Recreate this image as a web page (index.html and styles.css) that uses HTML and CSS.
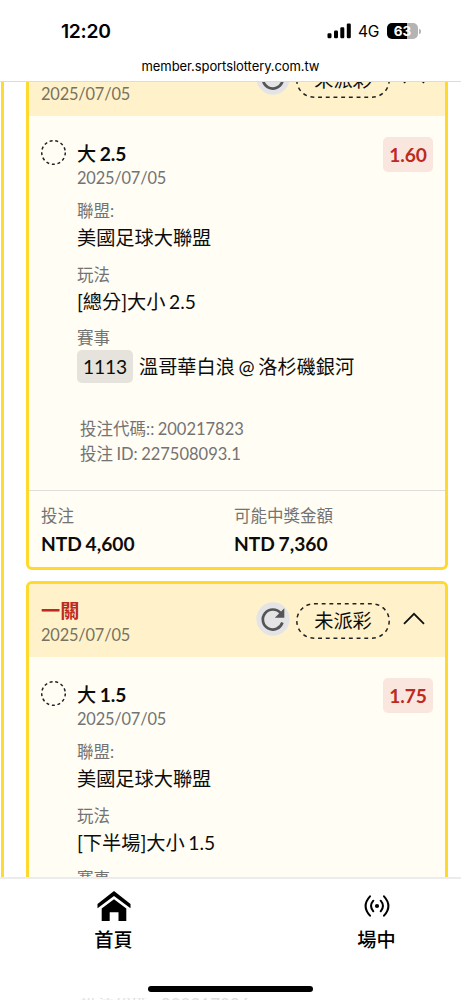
FILE: index.html
```html
<!DOCTYPE html>
<html lang="zh-Hant">
<head>
<meta charset="utf-8">
<title>member.sportslottery.com.tw</title>
<link rel="stylesheet" href="styles.css">
</head>
<body>
<header class="browser">
  <div class="status">
    <span class="clock">12:20</span>
    <div class="indicators">
      <svg class="signal" width="25" height="16" viewBox="0 0 25 16"><rect x="0.5" y="10.3" width="4" height="5" rx="1.2"/><rect x="7" y="7.5" width="4" height="7.8" rx="1.2"/><rect x="13.3" y="4.2" width="4" height="11.1" rx="1.2"/><rect x="19.8" y="0.6" width="4" height="14.7" rx="1.2"/></svg>
      <span class="network">4G</span>
      <div class="battery"><span class="level">63</span><i class="tip"></i></div>
    </div>
  </div>
  <div class="address">member.sportslottery.com.tw</div>
</header>

<main class="viewport">
  <div class="list">
    <article class="card">
      <div class="card-head">
        <div class="head-text"><div class="legs">一關</div><div class="date">2025/07/05</div></div>
        <svg class="refresh" width="34" height="34" viewBox="0 0 34 34"><circle cx="17" cy="17" r="16.7" fill="#e4e4e6"/><path d="M24.6 11.2A10 10 0 1 0 26.4 20.5" fill="none" stroke="#555557" stroke-width="2.7"/><path d="M28.3 6.3V15.8H18.8Z" fill="#555557"/></svg>
        <div class="pill"><svg width="94" height="36" viewBox="0 0 94 36"><rect x="0.8" y="0.8" width="92.4" height="34.4" rx="17.2"/></svg><span>未派彩</span></div>
        <svg class="chevron" width="22" height="13" viewBox="0 0 22 13"><path d="M1 11.8 11 1.8 21 11.8"/></svg>
      </div>
      <div class="card-body">
        <svg class="ring" width="25" height="25" viewBox="0 0 25 25"><circle cx="12.5" cy="12.5" r="11.8"/></svg>
        <div class="bet">
          <div class="pick"><span class="side">大</span> 2.5</div>
          <div class="date">2025/07/05</div>
          <dl class="facts">
            <dt>聯盟:</dt><dd>美國足球大聯盟</dd>
            <dt>玩法</dt><dd>[總分]大小 2.5</dd>
            <dt>賽事</dt><dd class="match"><span class="chip">1113</span><span>溫哥華白浪 @ 洛杉磯銀河</span></dd>
          </dl>
          <div class="codes"><div>投注代碼:: 200217823</div><div>投注 ID: 227508093.1</div></div>
        </div>
        <span class="odds">1.60</span>
      </div>
      <div class="card-foot">
        <div><div class="label">投注</div><div class="amount">NTD 4,600</div></div>
        <div><div class="label">可能中獎金額</div><div class="amount">NTD 7,360</div></div>
      </div>
    </article>

    <article class="card">
      <div class="card-head">
        <div class="head-text"><div class="legs">一關</div><div class="date">2025/07/05</div></div>
        <svg class="refresh" width="34" height="34" viewBox="0 0 34 34"><circle cx="17" cy="17" r="16.7" fill="#e4e4e6"/><path d="M24.6 11.2A10 10 0 1 0 26.4 20.5" fill="none" stroke="#555557" stroke-width="2.7"/><path d="M28.3 6.3V15.8H18.8Z" fill="#555557"/></svg>
        <div class="pill"><svg width="94" height="36" viewBox="0 0 94 36"><rect x="0.8" y="0.8" width="92.4" height="34.4" rx="17.2"/></svg><span>未派彩</span></div>
        <svg class="chevron" width="22" height="13" viewBox="0 0 22 13"><path d="M1 11.8 11 1.8 21 11.8"/></svg>
      </div>
      <div class="card-body">
        <svg class="ring" width="25" height="25" viewBox="0 0 25 25"><circle cx="12.5" cy="12.5" r="11.8"/></svg>
        <div class="bet">
          <div class="pick"><span class="side">大</span> 1.5</div>
          <div class="date">2025/07/05</div>
          <dl class="facts">
            <dt>聯盟:</dt><dd>美國足球大聯盟</dd>
            <dt>玩法</dt><dd>[下半場]大小 1.5</dd>
            <dt>賽事</dt>
          </dl>
        </div>
        <span class="odds">1.75</span>
      </div>
    </article>
  </div>
</main>

<nav class="tabs">
  <a class="tab">
    <svg width="34" height="31" viewBox="0 0 34 31"><path d="M17 0 33.5 13V17.2L17 5 .5 17.2V13Z"/><path d="M17 8.2 29.3 17.5V30H21.5V21.3H12.7V30H4.7V17.5Z"/></svg>
    <span>首頁</span>
  </a>
  <a class="tab">
    <svg class="live" width="28" height="22" viewBox="0 0 28 22"><circle cx="14" cy="11" r="2.1"/><path d="M10.3 5.7Q5.8 11 10.3 16.3M17.7 5.7Q22.2 11 17.7 16.3M7 1.3Q-1.8 11 7 20.7M21 1.3Q29.8 11 21 20.7"/></svg>
    <span>場中</span>
  </a>
</nav>
<div class="home"><i></i></div>
<div class="under"><span>投注代碼:: 200217826</span></div>
</body>
</html>
```

FILE: styles.css
```css
* { box-sizing: border-box; }
body {
  margin: 0;
  width: 461px;
  height: 1000px;
  display: flex;
  flex-direction: column;
  overflow: hidden;
  background: #fff;
  color: #0c0c0c;
  font-family: Lato, "Noto Sans CJK TC", sans-serif;
  font-size: 19.2px;
}
svg { display: block; flex: none; }

.browser { height: 82px; flex: none; border-bottom: 1px solid #dcdcde; font-family: Inter, sans-serif; color: #000; }
.status { display: flex; justify-content: space-between; align-items: center; padding: 19px 40px 0 61px; height: 43px; }
.clock { font-size: 19.3px; font-weight: 600; letter-spacing: -.3px; }
.indicators { display: flex; align-items: center; }
.network { font-size: 15.6px; margin: 1px 8px 0 6px; letter-spacing: -.3px; }
.battery { display: flex; align-items: center; }
.level {
  width: 31px; height: 16px; border-radius: 5px;
  background: linear-gradient(90deg, #000 63%, #b4b4b5 63%);
  color: #fff; font-size: 13.5px; font-weight: 700; line-height: 16px; text-align: center;
}
.tip { width: 2px; height: 5px; margin-left: 1px; border-radius: 0 2px 2px 0; background: #b4b4b5; }
.address { text-align: center; font-size: 13px; line-height: 18px; margin-top: 14px; letter-spacing: -.08px; }

.viewport { height: 795px; flex: none; overflow: hidden; }
.list {
  margin: -42px 0 0 1px;
  padding: 0 0 0 22px;
  border-left: 3px solid #ffda33;
  display: flex; flex-direction: column; gap: 11px;
}
.card {
  width: 422px; height: 530px; flex: none;
  display: flex; flex-direction: column;
  border: 3px solid #ffd92e; border-radius: 6px;
  background: #fffdf4; overflow: hidden;
}
.card-head {
  height: 73px; flex: none;
  display: flex; align-items: center;
  padding: 0 20px 0 12px;
  background: #fff2cb;
}
.head-text { flex: 1; padding-top: 4px; }
.legs { color: #bd2a1f; font-weight: 700; line-height: 24px; }
.date { color: #737373; font-size: 16.4px; line-height: 24px; letter-spacing: -.18px; }
.card-head .date { color: #78725f; }
.refresh { margin-bottom: 3px; }
.pill { display: grid; place-items: center; margin: 0 13px 0 6px; line-height: 28px; }
.pill > * { grid-area: 1 / 1; }
.pill span { padding-top: 1px; }
.pill rect, .ring circle { fill: none; stroke: #222; stroke-width: 1.5; stroke-dasharray: 3.9 3.8; }
.ring circle { stroke-dasharray: 3 2.7; }
.chevron { margin-bottom: 4px; }
.chevron path { fill: none; stroke: #111; stroke-width: 1.8; }

.card-body { flex: 1; display: flex; align-items: flex-start; padding: 25px 12px 0; }
.card-body .ring { margin: -1px 11px 0 0; }
.bet { flex: 1; }
.pick { font-weight: 700; line-height: 25px; word-spacing: -1px; letter-spacing: -.1px; }
.side { font-weight: 500; }
.pick + .date { line-height: 24px; }
.facts { margin: 9px 0 0; display: flex; flex-direction: column; }
dt, .label { color: #737373; font-size: 16.5px; line-height: 24px; }
dd { margin: 0 0 10px; line-height: 29px; height: 29.5px; word-spacing: -1.3px; }
dd.match { display: flex; align-items: center; gap: 6px; margin-bottom: 0; height: 33px; }
.chip { background: #e5e3dc; border-radius: 5px; width: 56px; text-align: center; letter-spacing: -.1px; line-height: 33px; }
.codes { margin: 34px 0 0 3px; color: #737373; font-size: 16.5px; line-height: 25px; word-spacing: -.8px; }
.odds {
  width: 50px; height: 35px; margin-top: -4px; border-radius: 5px;
  background: #f8e6df; color: #bd2a1f;
  font-weight: 700; line-height: 35px; text-align: center; letter-spacing: -.1px;
}
.card-foot {
  height: 77px; flex: none;
  display: grid; grid-template-columns: 193px 1fr;
  padding: 13px 12px 0;
  border-top: 1px solid #e0deda;
}
.amount { font-weight: 700; line-height: 31px; word-spacing: -1px; }

.tabs {
  height: 107px; flex: none;
  display: grid; grid-template-columns: 227px 299px;
  border-top: 2px solid #ececec;
  overflow: hidden;
}
.tab { display: flex; flex-direction: column; align-items: center; padding-top: 12px; font-weight: 500; color: #000; }
.tab span { line-height: 26px; margin-top: 5px; }
.tab .live { margin: 4px 0 5px; }
.live path { fill: none; stroke: #000; stroke-width: 2; stroke-linecap: round; }
.home { height: 14px; flex: none; display: flex; justify-content: center; padding-top: 2px; }
.home i { width: 165px; height: 6px; border-radius: 3px; background: #000; }
.under { height: 2px; overflow: hidden; padding-left: 80px; color: #dedede; font-size: 17px; line-height: 14px; }
```
